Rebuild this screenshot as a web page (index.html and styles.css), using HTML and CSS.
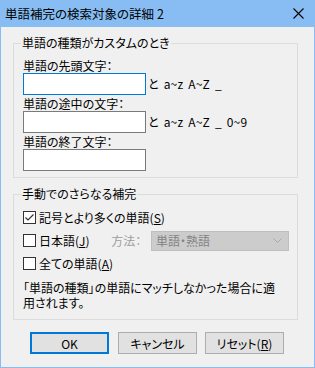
FILE: index.html
```html
<!doctype html>
<html>
<head>
	<meta charset="utf-8"/>
	<title>単語補完の検索対象の詳細 2</title>
	<link rel="stylesheet" href="styles.css">
</head>
<body>
	<div class="window">
		<div class="titlebar">
			<span class="title">単語補完の検索対象の詳細 2</span>
			<svg class="close" width="11" height="11" viewBox="0 0 11 11">
				<path d="M0.5 0.5 L10.5 10.5 M10.5 0.5 L0.5 10.5" stroke="#000" stroke-width="1.1" fill="none"/>
			</svg>
		</div>

		<div class="content">
			<fieldset class="group g1">
				<legend>単語の種類がカスタムのとき</legend>
				<div class="field">
					<div class="lbl">単語の先頭文字：</div>
					<div class="inrow"><span class="edit focus"></span><span class="hint">と a~z A~Z _</span></div>
				</div>
				<div class="field">
					<div class="lbl">単語の途中の文字：</div>
					<div class="inrow"><span class="edit"></span><span class="hint">と a~z A~Z _ 0~9</span></div>
				</div>
				<div class="field">
					<div class="lbl">単語の終了文字：</div>
					<div class="inrow"><span class="edit"></span></div>
				</div>
			</fieldset>

			<fieldset class="group g2">
				<legend>手動でのさらなる補完</legend>
				<div class="chk">
					<span class="cbox">
						<svg width="11" height="11" viewBox="0 0 11 11">
							<path d="M1.5 5.5 L4 8 L9.5 2.5" stroke="#333" stroke-width="1.2" fill="none"/>
						</svg>
					</span>
					<span>記号とより多くの単語(<u>S</u>)</span>
				</div>
				<div class="chk">
					<span class="cbox"></span>
					<span class="jp">日本語(<u>J</u>)</span>
					<span class="method">方法：</span>
					<span class="combo">
						<span>単語・熟語</span>
						<svg width="9" height="5" viewBox="0 0 9 5">
							<path d="M0.5 0.5 L4.5 4.5 L8.5 0.5" stroke="#a8a8a8" stroke-width="1" fill="none"/>
						</svg>
					</span>
				</div>
				<div class="chk">
					<span class="cbox"></span>
					<span>全ての単語(<u>A</u>)</span>
				</div>
				<p class="note">「単語の種類」の単語にマッチしなかった場合に適<br>用されます。</p>
			</fieldset>

			<div class="buttons">
				<button class="btn default">OK</button>
				<button class="btn">キャンセル</button>
				<button class="btn">リセット(<u>R</u>)</button>
			</div>
		</div>
	</div>
</body>
</html>
```

FILE: styles.css
```css
body {
	margin: 0;
	font-family: "Noto Sans CJK JP", "Noto Sans", sans-serif;
	font-size: 12px;
	font-feature-settings: "palt";
	color: #000;
}
.window {
	width: 313px;
	height: 367px;
	background-color: #f0f0f0;
	border: 1px solid #87bdf3;
	border-top: none;
}
.titlebar {
	height: 27px;
	margin: 0 -1px;
	padding: 0 0 0 5px;
	background-color: #87bdf3;
	display: flex;
	align-items: center;
	justify-content: space-between;
}
.title {
	font-size: 12.5px;
	line-height: 14px;
}
.close {
	margin-right: 11px;
	margin-top: -1px;
}
.group {
	margin: 9px 16px 0 12px;
	padding: 9px 8px 6px 8px;
	border: 1px solid #dcdcdc;
	min-width: 0;
}
.group legend {
	padding: 0 1px;
	margin-left: -1px;
	line-height: 14px;
}
.field {
	margin-bottom: 2px;
}
.field:last-child {
	margin-bottom: 0;
}
.lbl {
	line-height: 14px;
	padding-left: 1px;
}
.inrow {
	display: flex;
	align-items: center;
	height: 22px;
	padding-left: 1px;
}
.edit {
	width: 121px;
	height: 20px;
	background-color: #fff;
	border: 1px solid #7a7a7a;
}
.edit.focus {
	border-color: #0078d7;
}
.hint {
	margin-left: 2px;
	line-height: 14px;
	word-spacing: 2px;
	letter-spacing: 0.2px;
}
.g2 {
	padding-top: 5px;
	padding-bottom: 9px;
}
.chk {
	display: flex;
	align-items: center;
	height: 23px;
	padding-left: 1px;
	line-height: 14px;
}
.cbox {
	width: 11px;
	height: 11px;
	border: 1px solid #333;
	background-color: #fff;
	margin-right: 3px;
	display: flex;
}
.jp {
	width: 73px;
}
.method {
	width: 40px;
	color: #9d9d9d;
}
.combo {
	width: 127px;
	height: 18px;
	border: 1px solid #bfbfbf;
	background-color: #cccccc;
	color: #838383;
	display: flex;
	align-items: center;
	justify-content: space-between;
	padding: 0 6px 0 4px;
}
.note {
	margin: 5px 0 0 1px;
	line-height: 15px;
}
.buttons {
	display: flex;
	padding: 12px 0 0 29px;
}
.btn {
	width: 79px;
	height: 22px;
	margin-right: 9px;
	padding: 0;
	font-family: inherit;
	font-size: 12px;
	font-feature-settings: "palt";
	background-color: #e1e1e1;
	border: 1px solid #adadad;
	border-radius: 0;
	color: #000;
}
.btn:nth-child(2) {
	margin-right: 8px;
}
.btn.default {
	border: 2px solid #0078d7;
}
```
